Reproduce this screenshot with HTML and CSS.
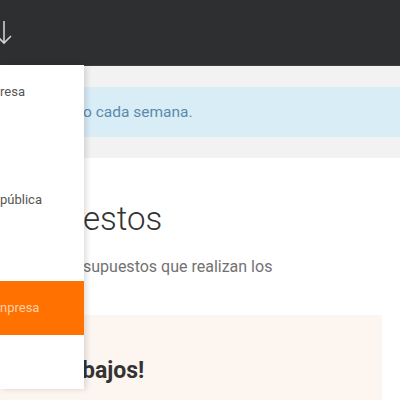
FILE: index.html
```html
<!DOCTYPE html>
<html lang="es">
<head>
<meta charset="utf-8">
<title>Presupuestos</title>
<link rel="stylesheet" href="styles.css">
</head>
<body>
<header class="topbar">
  <svg class="topbar-icon" width="20" height="30" viewBox="0 0 20 30">
    <path d="M4 1 V23 M-4 15 L4 23 L11 16" fill="none" stroke="#d0d0d0" stroke-width="1.6"/>
  </svg>
</header>
<main class="page">
  <section class="notice-band">
    <div class="notice">o cada semana.</div>
  </section>
  <section class="content">
    <h1 class="title">estos</h1>
    <p class="lead">supuestos que realizan los</p>
    <div class="promo">
      <h2 class="promo-title">bajos!</h2>
    </div>
  </section>
</main>
<nav class="menu">
  <a class="menu-item">resa</a>
  <a class="menu-item"></a>
  <a class="menu-item">pública</a>
  <a class="menu-item"></a>
  <a class="menu-item menu-item-active">npresa</a>
  <a class="menu-item"></a>
</nav>
</body>
</html>
```
FILE: styles.css
```css
html, body {
  margin: 0;
  padding: 0;
  background: #ffffff;
  font-family: Roboto, "Liberation Sans", sans-serif;
  overflow: hidden;
  height: 400px;
}

.topbar {
  height: 65px;
  background: #2e2f31;
  border-bottom: 1px solid #3d3e40;
  display: flex;
  align-items: center;
}

.topbar-icon {
  display: block;
  margin-top: 4px;
}

.notice-band {
  background: #f2f2f2;
  padding: 21px 0 21px 0;
}

.notice {
  background: #d9edf7;
  height: 50px;
  display: flex;
  align-items: center;
  padding-left: 83px;
  font-size: 15.5px;
  color: #5a8aab;
}

.content {
  padding-left: 83px;
}

.title {
  margin: 41px 0 0 0;
  font-size: 33px;
  font-weight: 300;
  color: #333333;
  line-height: 40px;
}

.lead {
  margin: 17px 0 0 0;
  font-size: 16px;
  line-height: 22px;
  color: #727272;
}

.promo {
  margin: 37px 18px 0 -83px;
  padding: 36px 0 0 82px;
  background: #fdf5f0;
  height: 100px;
}

.promo-title {
  margin: 0;
  font-size: 23px;
  font-weight: 700;
  color: #333333;
  line-height: 40px;
}

.menu {
  position: absolute;
  top: 65px;
  left: 0;
  width: 84px;
  background: #ffffff;
  box-shadow: 2px 0 6px rgba(0, 0, 0, 0.15);
  display: flex;
  flex-direction: column;
  overflow: hidden;
}

.menu-item {
  display: block;
  height: 54px;
  line-height: 54px;
  font-size: 13px;
  color: #555555;
  white-space: nowrap;
}

.menu-item-active {
  background: #ff7100;
  color: #ffcfa8;
}
```
